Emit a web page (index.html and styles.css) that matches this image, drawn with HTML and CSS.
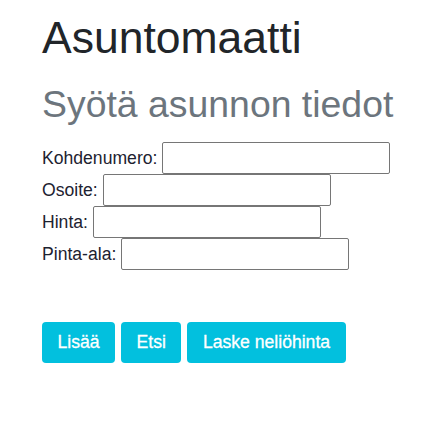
FILE: index.html
```html
<!DOCTYPE html>
<html lang="fi">
<head>
<meta charset="utf-8">
<title>Asuntomaatti</title>
<link rel="stylesheet" href="styles.css">
</head>
<body>
<div class="container">
  <h1 class="title">Asuntomaatti</h1>
  <h2 class="subtitle">Syötä asunnon tiedot</h2>
  <form class="form">
    <div class="row"><label for="k">Kohdenumero:</label><input id="k" class="field" type="text"></div>
    <div class="row"><label for="o">Osoite:</label><input id="o" class="field" type="text"></div>
    <div class="row"><label for="h">Hinta:</label><input id="h" class="field" type="text"></div>
    <div class="row"><label for="p">Pinta-ala:</label><input id="p" class="field" type="text"></div>
    <div class="actions">
      <button type="button" class="btn">Lisää</button>
      <button type="button" class="btn">Etsi</button>
      <button type="button" class="btn">Laske neliöhinta</button>
    </div>
  </form>
</div>
</body>
</html>
```

FILE: styles.css
```css
* { box-sizing: border-box; }
html, body { margin: 0; padding: 0; background: #fff; }
body {
  font-family: "Liberation Sans", Arial, sans-serif;
  color: #212529;
  font-size: 17.6px;
}
.container {
  padding: 11px 0 0 42px;
}
.title {
  margin: 0;
  font-size: 44.5px;
  font-weight: 400;
  line-height: 1.2;
  color: #212529;
}
.subtitle {
  margin: 18px 0 0;
  font-size: 37.4px;
  font-weight: 400;
  line-height: 1.2;
  color: #6c757d;
}
.form {
  margin-top: 15px;
  display: flex;
  flex-direction: column;
}
.row {
  display: flex;
  align-items: center;
  height: 32px;
  gap: 5px;
}
.row label {
  line-height: 1.15;
  color: #1d2230;
}
.field {
  width: 228px;
  height: 32px;
  border: 1px solid #767676;
  border-radius: 2px;
  padding: 2px 4px;
  font: inherit;
  background: #fff;
}
.actions {
  margin-top: 52px;
  display: flex;
  gap: 6px;
}
.btn {
  font: inherit;
  font-size: 17.6px;
  color: #fff;
  background: #02c0de;
  border: none;
  border-radius: 4px;
  height: 41px;
  padding: 0 15.5px;
  line-height: 1;
  cursor: pointer;
  -webkit-text-stroke: 0.3px #fff;
}
```
